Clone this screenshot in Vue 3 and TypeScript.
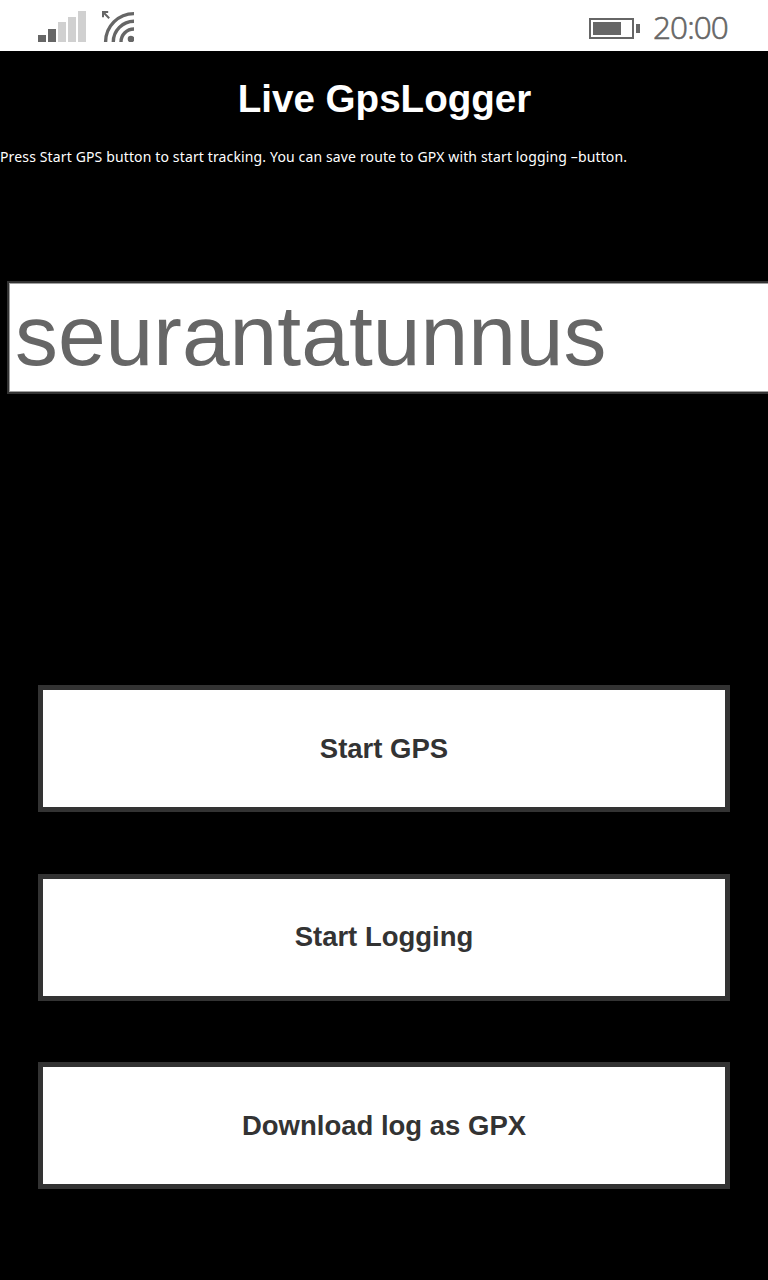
<script setup lang="ts">
import { ref } from 'vue'

interface Action {
  id: string
  label: string
}

const trackingId = ref('')
const actions: Action[] = [
  { id: 'gps', label: 'Start GPS' },
  { id: 'log', label: 'Start Logging' },
  { id: 'gpx', label: 'Download log as GPX' },
]
</script>

<template>
  <div class="screen">
    <header class="status">
      <svg class="signals" width="96" height="31" viewBox="0 0 96 31" aria-hidden="true">
        <g fill="#666">
          <rect x="0" y="24" width="8" height="7" />
          <rect x="10" y="18" width="8" height="13" />
        </g>
        <g fill="#d0d0d0">
          <rect x="20" y="11" width="8" height="20" />
          <rect x="30" y="6" width="8" height="25" />
          <rect x="40" y="0" width="8" height="31" />
        </g>
        <g fill="none" stroke="#666" stroke-width="3.4">
          <path d="M67.6 31A28.4 28.4 0 0 1 96 2.6" />
          <path d="M75.3 31A20.7 20.7 0 0 1 96 10.3" />
          <path d="M83 31A13 13 0 0 1 96 18" />
        </g>
        <circle cx="93" cy="28" r="3.3" fill="#666" />
        <path d="M65 6.2V1H70.2M65 1L71.2 7.2" fill="none" stroke="#666" stroke-width="2" />
      </svg>
      <div class="right">
        <svg width="51" height="21" viewBox="0 0 51 21" aria-hidden="true">
          <rect x="1" y="1" width="43" height="19" fill="none" stroke="#666" stroke-width="2" />
          <rect x="4" y="4" width="28" height="13" fill="#666" />
          <rect x="47" y="6" width="4" height="9" fill="#666" />
        </svg>
        <time class="clock">20:00</time>
      </div>
    </header>
    <main>
      <h1>Live GpsLogger</h1>
      <p>Press Start GPS button to start tracking. You can save route to GPX with start logging –button.</p>
      <input v-model="trackingId" class="field" type="text" placeholder="seurantatunnus" />
      <div class="actions">
        <button v-for="a in actions" :key="a.id" type="button">{{ a.label }}</button>
      </div>
    </main>
  </div>
</template>

<style>
html,
body {
  margin: 0;
  background: #000;
}
</style>

<style scoped>
.screen {
  width: 768px;
  height: 1280px;
  overflow: hidden;
  background: #000;
  color: #fff;
  font-family: "Liberation Sans", Arial, sans-serif;
}
.status {
  display: flex;
  justify-content: space-between;
  box-sizing: border-box;
  height: 51px;
  padding: 11px 38px 0;
  background: #fff;
}
.signals {
  display: block;
}
.right {
  display: flex;
  gap: 13px;
  width: 141px;
}
.right svg {
  flex: none;
  margin-top: 7px;
}
.clock {
  color: #666;
  font: 300 31.5px/31px "Open Sans", "Noto Sans", sans-serif;
  letter-spacing: -0.9px;
  white-space: nowrap;
  -webkit-text-stroke: 0.6px #666;
}
h1 {
  height: 44px;
  margin: 26px 0 0;
  padding-left: 1px;
  font-size: 38.6px;
  line-height: 44px;
  text-align: center;
}
p {
  height: 20px;
  margin: 26px 0 0;
  font: 14px/20px "Noto Sans", sans-serif;
  letter-spacing: 0.138px;
  white-space: nowrap;
}
.field {
  display: block;
  box-sizing: border-box;
  width: 900px;
  height: 113px;
  margin: 114px 0 0 7px;
  padding: 0 6px 4px;
  border: 2px solid #333;
  border-radius: 0;
  outline: none;
  background: #fff;
  box-shadow: inset 0 0 0 1px #a0a0a0;
  color: #666;
  font-family: inherit;
  font-size: 85.8px;
}
.field::placeholder {
  color: #666;
  opacity: 1;
}
.actions {
  display: grid;
  row-gap: 61.5px;
  margin: 291px 38px 0;
}
button {
  box-sizing: border-box;
  height: 127px;
  padding: 0;
  border: 5px solid #333;
  border-radius: 0;
  background: #fff;
  color: #333;
  font: bold 27.5px/32px "Liberation Sans", Arial, sans-serif;
}
</style>
